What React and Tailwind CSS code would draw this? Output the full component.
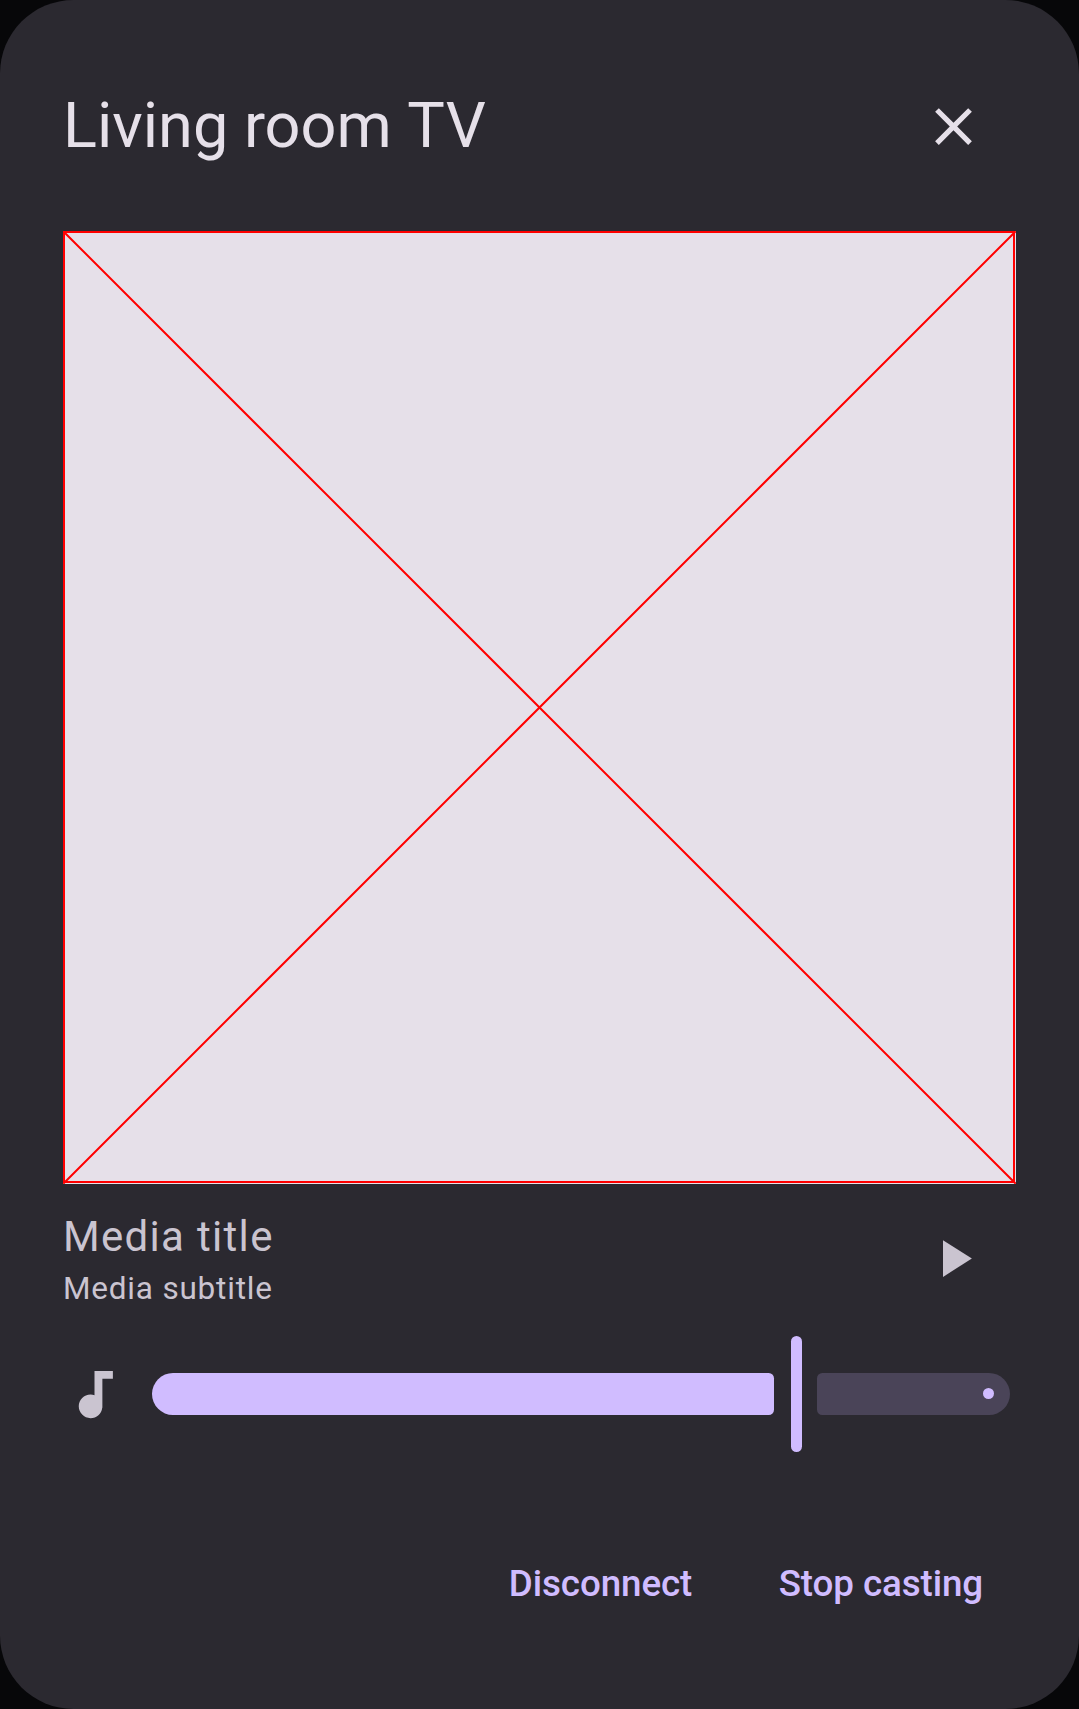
function Icon({ d, className }) {
  return (
    <svg viewBox="0 0 24 24" className={`size-[63px] shrink-0 fill-current ${className}`} aria-hidden="true">
      <path d={d} />
    </svg>
  );
}

const CLOSE = "M19 6.41L17.59 5 12 10.59 6.41 5 5 6.41 10.59 12 5 17.59 6.41 19 12 13.41 17.59 19 19 17.59 13.41 12z";
const PLAY = "M8 5v14l11-7z";
const AUDIO =
  "M12 3v9.28c-.47-.17-.97-.28-1.5-.28C8.01 12 6 14.01 6 16.5S8.01 21 10.5 21c2.31 0 4.2-1.75 4.45-4H15V6h4V3h-7z";

function Header() {
  return (
    <header className="flex h-[84px] items-start justify-between">
      <h1 className="text-[63px] leading-[84px] text-[#e6e0e9]">
        Living room <span className="tracking-[0.4px]">TV</span>
      </h1>
      <button aria-label="Close" className="mt-[11px] mr-[31px]">
        <Icon d={CLOSE} className="text-[#e6e0e9]" />
      </button>
    </header>
  );
}

function Artwork() {
  return (
    <svg viewBox="0 0 953 953" className="mt-[63px] size-[953px] shrink-0 bg-[#e6e0e9]" fill="none" stroke="#ff0000" strokeWidth="2">
      <rect x="1" y="1" width="950" height="950" />
      <path d="M1 1L952 952M1 952L952 1" strokeLinecap="square" />
    </svg>
  );
}

function MediaInfo() {
  return (
    <div className="mt-[21px] flex h-[105px] items-start justify-between text-[#cac4d0]">
      <div>
        <p className="text-[42px] leading-[63px] tracking-[1.3125px]">Media title</p>
        <p className="text-[31.5px] leading-[42px] tracking-[0.8px]">Media subtitle</p>
      </div>
      <button aria-label="Play" className="mt-[22px] mr-[31px]">
        <Icon d={PLAY} className="" />
      </button>
    </div>
  );
}

function VolumeSlider() {
  return (
    <div className="mt-[26px] flex h-[116px] items-center">
      <Icon d={AUDIO} className="text-[#cac4d0]" />
      <div className="ml-[26px] h-[42px] w-[622px] rounded-l-[21px] rounded-r-[5.25px] bg-[#d0bcff]" />
      <div className="ml-[17px] h-[116px] w-[11px] rounded-full bg-[#d0bcff]" />
      <div className="ml-[15px] flex h-[42px] w-[193px] items-center justify-end rounded-l-[5.25px] rounded-r-[21px] bg-[#4a4458] pr-[16px]">
        <span className="mb-px size-[11px] rounded-full bg-[#d0bcff]" />
      </div>
    </div>
  );
}

function Actions() {
  return (
    <div className="mt-[106px] mr-[33px] flex justify-end gap-[86.5px] text-[36.75px] leading-[52.5px] font-medium tracking-[-0.1px] text-[#d0bcff]">
      <button>Disconnect</button>
      <button>Stop casting</button>
    </div>
  );
}

export default function App() {
  return (
    <div className="h-[1709px] w-[1079px] bg-[#070709] font-['Roboto',sans-serif]">
      <main className="flex h-full flex-col rounded-[73.5px] bg-[#2b2930] px-[63px] pt-[84px]">
        <Header />
        <Artwork />
        <MediaInfo />
        <VolumeSlider />
        <Actions />
      </main>
    </div>
  );
}
